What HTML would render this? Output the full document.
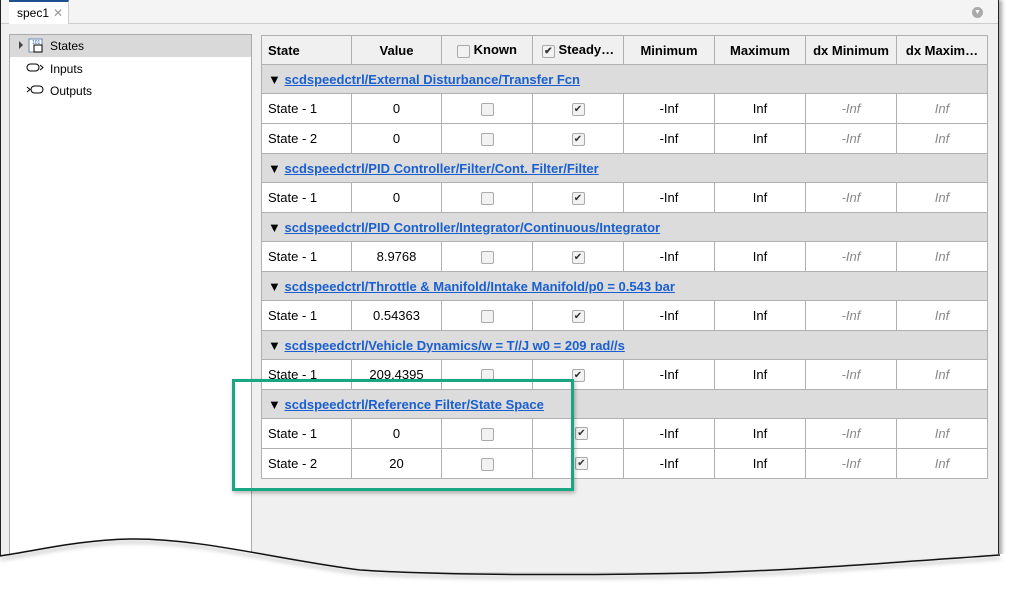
<!DOCTYPE html>
<html><head><meta charset="utf-8"><style>
*{margin:0;padding:0;box-sizing:border-box}
body{width:1013px;height:590px;background:#fff;position:relative;overflow:hidden;font-family:"Liberation Sans",Arial,sans-serif;font-size:12px;color:#000}
.win{position:absolute;left:0;top:0;width:999px;height:572px;background:#f0f0f0;border-left:1px solid #222;border-right:1px solid #222;box-shadow:3px 0 4px rgba(0,0,0,.35);overflow:hidden}
.tabbar{position:absolute;left:0;top:0;width:997px;height:24px;background:#f4f4f4;border-bottom:1px solid #ccc}
.tab{position:absolute;left:8px;top:0;width:60px;height:24px;background:#fff;border-top:2px solid #1e4f8f;border-right:1px solid #ccc;font-size:12px;padding:4px 0 0 8px}
.tab span{color:#999;margin-left:4px}
.left{position:absolute;left:8px;top:34px;width:243px;height:560px;background:#fff;border:1px solid #aaa}
.sel{position:absolute;left:0;top:0;width:241px;height:22px;background:#d9d9d9}
.li{position:absolute;left:40px;font-size:12px}
.tbl{position:absolute;left:261px;top:35px;border-collapse:collapse;background:#fff}
.tbl td,.tbl th{border:1px solid #b0b0b0;height:30px;text-align:center;font-size:13px;padding:0}
.tbl th{background:#f0f0f0;font-weight:bold;height:29px}
.tbl td.g{background:#dcdcdc;text-align:left;padding-left:6px;height:29px}
.tbl td.g a{color:#1a5fd0;text-decoration:underline;font-weight:bold;font-size:13px}
.tbl td.s{text-align:left;padding-left:6px}
.i{font-style:italic;color:#888}
.cb{display:inline-block;width:13px;height:13px;border:1px solid #aaa;border-radius:2px;background:#f2f2f2;vertical-align:middle;font-size:10px;line-height:11px;color:#333;text-align:center}
.green{position:absolute;left:232px;top:379px;width:342px;height:112px;border:3px solid #19a683;box-shadow:1px 2px 4px rgba(0,0,0,.3)}
</style></head><body>
<div class="win">
<div class="tabbar"><div class="tab">spec1<span>✕</span></div>
<div style="position:absolute;left:971px;top:7px;width:11px;height:11px;border-radius:50%;background:#aaa;color:#fff;font-size:7px;text-align:center;line-height:11px">▼</div></div>
<div class="left"><div class="sel"></div>
<div style="position:absolute;left:9px;top:6px;width:0;height:0;border-left:4px solid #444;border-top:4px solid transparent;border-bottom:4px solid transparent"></div>
<svg style="position:absolute;left:18px;top:3px" width="16" height="16"><rect x="1" y="1" width="13" height="13" fill="#fff" stroke="#6a8ab0"/><rect x="6" y="7" width="8" height="7" fill="#fff" stroke="#000"/><text x="4" y="6" font-size="5" fill="#1a5fd0">101</text></svg>
<div class="li" style="top:4px">States</div>
<svg style="position:absolute;left:16px;top:28px" width="20" height="10"><rect x="1" y="1" width="12" height="7" rx="3.5" fill="none" stroke="#000"/><path d="M14 2l3 2.5-3 2.5" fill="none" stroke="#000"/></svg>
<div class="li" style="top:27px">Inputs</div>
<svg style="position:absolute;left:16px;top:50px" width="20" height="10"><path d="M1 2l3 2.5-3 2.5" fill="none" stroke="#000"/><rect x="5" y="1" width="12" height="7" rx="3.5" fill="none" stroke="#000"/></svg>
<div class="li" style="top:49px">Outputs</div>
</div>
</div>
<table class="tbl">
<colgroup><col style="width:90px"><col style="width:90px"><col style="width:91px"><col style="width:91px"><col style="width:91px"><col style="width:91px"><col style="width:91px"><col style="width:91px"></colgroup>
<tr><th style="text-align:left;padding-left:6px">State</th><th>Value</th><th><span class="cb"></span> Known</th><th><span class="cb">✔</span> Steady…</th><th>Minimum</th><th>Maximum</th><th>dx Minimum</th><th>dx Maxim…</th></tr>
<tr><td class="g" colspan="8">▼ <a>scdspeedctrl/External Disturbance/Transfer Fcn</a></td></tr>
<tr><td class="s">State - 1</td><td>0</td><td><span class="cb"></span></td><td><span class="cb">✔</span></td><td>-Inf</td><td>Inf</td><td class="i">-Inf</td><td class="i">Inf</td></tr>
<tr><td class="s">State - 2</td><td>0</td><td><span class="cb"></span></td><td><span class="cb">✔</span></td><td>-Inf</td><td>Inf</td><td class="i">-Inf</td><td class="i">Inf</td></tr>
<tr><td class="g" colspan="8">▼ <a>scdspeedctrl/PID Controller/Filter/Cont. Filter/Filter</a></td></tr>
<tr><td class="s">State - 1</td><td>0</td><td><span class="cb"></span></td><td><span class="cb">✔</span></td><td>-Inf</td><td>Inf</td><td class="i">-Inf</td><td class="i">Inf</td></tr>
<tr><td class="g" colspan="8">▼ <a>scdspeedctrl/PID Controller/Integrator/Continuous/Integrator</a></td></tr>
<tr><td class="s">State - 1</td><td>8.9768</td><td><span class="cb"></span></td><td><span class="cb">✔</span></td><td>-Inf</td><td>Inf</td><td class="i">-Inf</td><td class="i">Inf</td></tr>
<tr><td class="g" colspan="8">▼ <a>scdspeedctrl/Throttle &amp; Manifold/Intake Manifold/p0 = 0.543 bar</a></td></tr>
<tr><td class="s">State - 1</td><td>0.54363</td><td><span class="cb"></span></td><td><span class="cb">✔</span></td><td>-Inf</td><td>Inf</td><td class="i">-Inf</td><td class="i">Inf</td></tr>
<tr><td class="g" colspan="8">▼ <a>scdspeedctrl/Vehicle Dynamics/w = T//J w0 = 209 rad//s</a></td></tr>
<tr><td class="s">State - 1</td><td>209.4395</td><td><span class="cb"></span></td><td><span class="cb">✔</span></td><td>-Inf</td><td>Inf</td><td class="i">-Inf</td><td class="i">Inf</td></tr>
<tr><td class="g" colspan="8">▼ <a>scdspeedctrl/Reference Filter/State Space</a></td></tr>
<tr><td class="s">State - 1</td><td>0</td><td><span class="cb"></span></td><td></td><td>-Inf</td><td>Inf</td><td class="i">-Inf</td><td class="i">Inf</td></tr>
<tr><td class="s">State - 2</td><td>20</td><td><span class="cb"></span></td><td></td><td>-Inf</td><td>Inf</td><td class="i">-Inf</td><td class="i">Inf</td></tr>
</table>
<span class="cb" style="position:absolute;left:575px;top:427px">✔</span>
<span class="cb" style="position:absolute;left:575px;top:457px">✔</span>
<div class="green"></div>
<svg style="position:absolute;left:0;top:0;z-index:10" width="1013" height="590">
<path d="M0 556 C40 550 80 540 130 539 C200 538 280 560 360 570 C450 576 600 575 700 573 C800 570 900 562 1013 553 L1013 590 L0 590Z" fill="#fff"/>
<path d="M0 556 C40 550 80 540 130 539 C200 538 280 560 360 570 C450 576 600 575 700 573 C800 570 900 562 1000 555" fill="none" stroke="#111" stroke-width="1.5" style="filter:drop-shadow(0 3px 2px rgba(0,0,0,.4))"/>
</svg>
</body></html>
